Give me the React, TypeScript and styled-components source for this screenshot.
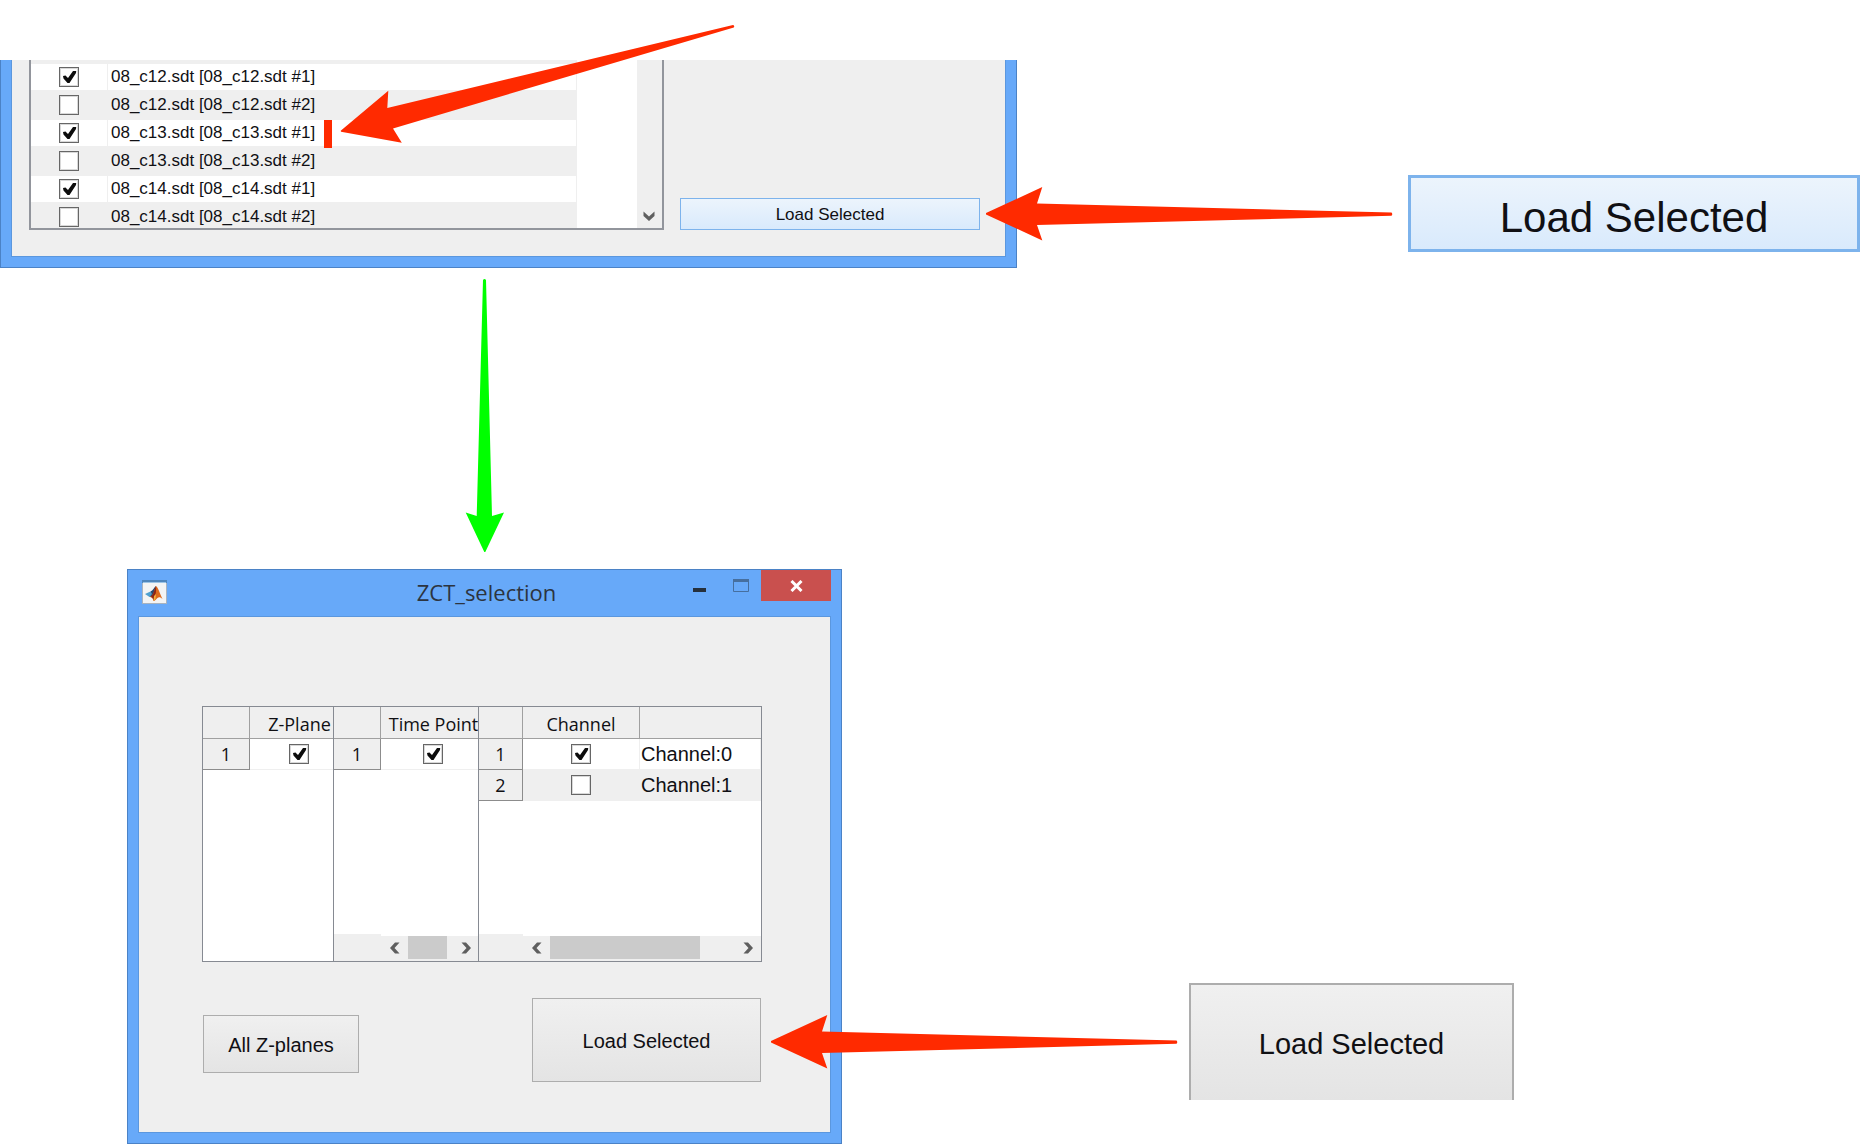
import React, { useState } from "react";
import styled, { createGlobalStyle, css } from "styled-components";

const sans = `"Liberation Sans", Arial, sans-serif`;
const ui = `"Open Sans", "Noto Sans", sans-serif`;
const line = "#868a92";
const face = "#efefef";

const Global = createGlobalStyle`
  *, *::before, *::after { box-sizing: border-box; }
  body { margin: 0; background: #fff; color: #101014; font-family: ${sans}; }
  button, input { font: inherit; color: inherit; margin: 0; }
`;

const Page = styled.main`
  display: flex;
  flex-direction: column;
  padding-top: 60px;
`;

const Step = styled.section<{ $indent?: number }>`
  display: flex;
  align-items: flex-start;
  padding-left: ${(p) => p.$indent ?? 0}px;
`;

const Frame = styled.div<{ $width: number; $cut?: boolean }>`
  flex: 0 1 ${(p) => p.$width}px;
  min-width: 0;
  padding: 0 10px 10px;
  background: #67a9f9;
  border: 1px solid #4b82c6;
  ${(p) => p.$cut && css`border-top: 0;`}
`;

/* ---------- file list ---------- */

const ListClient = styled.div`
  display: flex;
  align-items: flex-end;
  gap: 16px;
  padding: 0 25px 26px 17px;
  background: ${face};
  border: 1px solid #5b97de;
  border-top: 0;
`;

const ListBox = styled.div`
  flex: 1;
  min-width: 0;
  height: 170px;
  display: flex;
  overflow: hidden;
  background: #fff;
  border: 2px solid #92959c;
  border-top: 0;
`;

const ListPane = styled.div`
  flex: 1;
  margin-right: 60px;
  padding-top: 3px;
  background: ${face};
`;

const FileTable = styled.table`
  width: 100%;
  table-layout: fixed;
  border-collapse: separate;
  border-spacing: 0;
  font-size: 17px;
  line-height: 20px;
`;

const FileRow = styled.tr`
  td {
    height: 28px;
    padding: 0 0 0 3px;
    border: 1px solid ${face};
    border-left: 0;
    background: #fff;
  }
  td:first-child { padding: 0; }
  &:nth-child(even) td { background: ${face}; }
`;

const ListScroll = styled.div`
  width: 25px;
  display: flex;
  flex-direction: column;
  justify-content: flex-end;
  background: ${face};
`;

const ArrowButton = styled.button`
  width: 27px;
  height: 23px;
  padding: 0;
  border: 0;
  background: none;
  display: flex;
  align-items: center;
  justify-content: center;
  ${ListScroll} & { width: 23px; height: 25px; }
`;

/* ---------- push buttons ---------- */

const PushButton = styled.button<{
  $w?: number;
  $h: number;
  $size: number;
  $blue?: boolean;
  $edge?: number;
  $cut?: boolean;
  $drop?: number;
}>`
  width: ${(p) => (p.$w ? `${p.$w}px` : "auto")};
  flex: ${(p) => (p.$w ? "0 0 auto" : "1 1 0")};
  min-height: ${(p) => p.$h}px;
  padding: ${(p) => p.$drop ?? 2}px 0 0;
  font-family: ${sans};
  font-size: ${(p) => p.$size}px;
  white-space: nowrap;
  border: ${(p) => p.$edge ?? 1}px solid ${(p) => (p.$blue ? "#7db3ec" : "#adadad")};
  background: ${(p) =>
    p.$blue
      ? "linear-gradient(#ecf4fc, #d9eafc)"
      : "linear-gradient(#f0f0f0, #e4e4e4)"};
  ${(p) => p.$cut && css`border-bottom: 0;`}
`;

const Callout = styled.div<{ $top: number; $gap: number; $grow?: boolean }>`
  display: flex;
  flex: ${(p) => (p.$grow ? "1 1 0" : "0 0 auto")};
  padding-top: ${(p) => p.$top}px;
  margin-left: ${(p) => p.$gap}px;
`;

/* ---------- check box ---------- */

const CheckWrap = styled.label`
  display: grid;
  width: 20px;
  height: 20px;
  margin: 0 auto;
  > * { grid-area: 1 / 1; }
  svg { pointer-events: none; }
`;

const CheckInput = styled.input`
  appearance: none;
  width: 20px;
  height: 20px;
  background: #fff;
  border: 1px solid #666;
  box-shadow: inset 0 0 0 1px #d8d8d8;
  & + svg { visibility: hidden; }
  &:checked + svg { visibility: visible; }
`;

function Check({ on, label }: { on?: boolean; label: string }) {
  const [checked, setChecked] = useState(!!on);
  return (
    <CheckWrap>
      <CheckInput
        type="checkbox"
        aria-label={label}
        checked={checked}
        onChange={(e) => setChecked(e.target.checked)}
      />
      <svg width="20" height="20" viewBox="0 0 20 20" aria-hidden="true">
        <path d="M4 9 L6.5 8.5 L9 11 L14 4 L17.2 4 L17 6 L10.5 16 L8.5 16 L4.5 11.5 Z" fill="#0c0c0c" />
      </svg>
    </CheckWrap>
  );
}

function Chevron({ dir }: { dir: "left" | "right" | "down" }) {
  const turn = { left: 0, right: 180, down: -90 }[dir];
  return (
    <svg width="12" height="12" viewBox="0 0 12 12" aria-hidden="true">
      <path
        d="M1 6 L6 0.5 H10.5 L5.5 6 L10.5 11.5 H6 Z"
        fill="#5f5f5f"
        transform={`rotate(${turn} 6 6)`}
      />
    </svg>
  );
}

/* ---------- dialog ---------- */

const TitleBar = styled.header`
  display: grid;
  grid-template-columns: 1fr auto 1fr;
  height: 46px;
  align-items: center;
  padding: 0 0 2px 4px;
`;

const Title = styled.h1`
  margin: 0;
  font: 400 22px/30px ${ui};
  color: #2c3440;
`;

const Controls = styled.div`
  display: flex;
  align-self: start;
  justify-content: flex-end;
`;

const ControlButton = styled.button<{ $close?: boolean }>`
  width: ${(p) => (p.$close ? 70 : 41)}px;
  height: 31px;
  padding: 0;
  border: 0;
  display: flex;
  align-items: center;
  justify-content: center;
  background: ${(p) => (p.$close ? "#c9504e" : "none")};
`;

const DialogClient = styled.div`
  padding: 89px 68px 50px 63px;
  background: ${face};
  border: 1px solid #5b97de;
`;

const Panels = styled.div`
  display: grid;
  grid-template-columns: 131fr 145fr 282fr;
  height: 256px;
  border: 1px solid ${line};
  background: #fff;
`;

const Panel = styled.div`
  min-width: 0;
  overflow: hidden;
  display: flex;
  flex-direction: column;
  justify-content: space-between;
  & + & { border-left: 1px solid ${line}; margin-left: -1px; }
`;

const Grid = styled.table<{ $width: number }>`
  width: ${(p) => p.$width}px;
  table-layout: fixed;
  border-collapse: separate;
  border-spacing: 0;
  font: 400 18px/24px ${ui};
  text-align: center;
  th, td { height: 31px; padding: 0; font-weight: 400; white-space: nowrap; }
  th { background: ${face}; border-right: 1px solid #8c8c8c; border-bottom: 1px solid #8c8c8c; }
  thead th { height: 32px; padding-top: 2px; border-right-color: #a0a0a0; border-bottom-color: #a0a0a0; }
  thead th:last-child { border-right: 0; }
  td { border-right: 1px solid ${face}; border-bottom: 1px solid ${face}; }
  tbody tr:nth-child(even) td { background: ${face}; }
`;

const NameCell = styled.td`
  && { padding-left: 1px; text-align: left; font: 400 20px/24px ${sans}; }
`;

const ScrollRow = styled.div`
  display: flex;
  align-items: flex-end;
`;

const Corner = styled.div<{ $w: number }>`
  width: ${(p) => p.$w}px;
  height: 27px;
  background: ${face};
`;

const Track = styled.div`
  flex: 1;
  display: flex;
  height: 25px;
  padding-bottom: 2px;
  background: ${face};
`;

const ThumbLane = styled.div`
  flex: 1;
`;

const Thumb = styled.div<{ $w: number }>`
  width: ${(p) => p.$w}px;
  height: 100%;
  background: #cbcbcb;
`;

const Actions = styled.div`
  display: flex;
  align-items: flex-start;
  justify-content: space-between;
  padding: 36px 1px 0;
`;

const Lowered = styled.div`
  padding-top: 17px;
`;

function HScroll({ corner, thumb }: { corner: number; thumb: number }) {
  return (
    <ScrollRow>
      <Corner $w={corner} />
      <Track>
        <ArrowButton aria-label="Scroll left"><Chevron dir="left" /></ArrowButton>
        <ThumbLane><Thumb $w={thumb} /></ThumbLane>
        <ArrowButton aria-label="Scroll right"><Chevron dir="right" /></ArrowButton>
      </Track>
    </ScrollRow>
  );
}

function MatlabIcon() {
  return (
    <svg width="25" height="24" viewBox="0 0 25 24" aria-hidden="true">
      <rect x="0.5" y="0.5" width="24" height="23" fill="#f3f4f5" stroke="#a9b3bf" />
      <rect x="0" y="0" width="25" height="3" fill="#4f86bd" />
      <rect x="1" y="2" width="23" height="1" fill="#9cc4e6" />
      <path d="M3 14 L8.5 11.5 L11 14.5 L7.5 17 Z" fill="#4fa0cf" />
      <path d="M8.5 11.5 C11 10.5 12 7.5 14 6 L13 12 L10 16.5 L7.5 17 L10 14 Z" fill="#27486f" />
      <path d="M14 6 C16 7 18 14 20.5 19 C18.5 17 17 16.5 15.5 18 C14 19.5 13 21 11.5 21 C11 18.5 9.5 17 8 17 C11.5 16 12.5 9 14 6 Z" fill="#dd6a1c" />
      <path d="M14 6 C14.5 9 14 14 12 20.5 C11 18 10 17 8.5 17 C11.5 15.5 12.5 9 14 6 Z" fill="#8d2416" />
      <path d="M12 16 L14 14 L13.5 19 L11.5 21 Z" fill="#f5b23a" />
    </svg>
  );
}

/* ---------- arrows ---------- */

const SideArrow = styled.svg<{ $top: number; $overlap: number }>`
  flex: none;
  display: block;
  position: relative;
  z-index: 1;
  margin-top: ${(p) => p.$top}px;
  margin-left: -${(p) => p.$overlap}px;
`;

const DownArrow = styled.svg`
  display: block;
  margin: 11px 0 16px 465px;
`;

const Marks = styled.svg`
  position: absolute;
  left: 320px;
  top: 20px;
  z-index: 1;
  pointer-events: none;
`;

const red = "#ff2a00";

function LeftArrow({ top, overlap }: { top: number; overlap: number }) {
  return (
    <SideArrow $top={top} $overlap={overlap} width="407" height="54" viewBox="0 0 407 54" aria-hidden="true">
      <path
        d="M0 26 L56.3 0 L51 16.4 L405.5 25.6 Q407 27.2 405.5 28.8 L51 38 L56.3 53.5 L0 27.4 Z"
        fill={red}
      />
    </SideArrow>
  );
}

const files = ["08_c12.sdt", "08_c13.sdt", "08_c14.sdt"];

export default function App() {
  return (
    <Page>
      <Global />
      <Marks width="420" height="130" viewBox="320 20 420 130" aria-hidden="true">
        <path
          d="M340.7 130.7 L388.3 90.7 L387.3 108 L733 25 Q735 25.6 733.8 27.4 L393 128.4 L401.8 142.7 L341 131.7 Z"
          fill={red}
        />
        <rect x="324" y="120" width="8" height="28" fill={red} />
      </Marks>

      <Step>
        <Frame $width={1017} $cut>
          <ListClient>
            <ListBox>
              <ListPane>
                <FileTable aria-label="Files">
                  <colgroup>
                    <col style={{ width: 77 }} />
                    <col />
                  </colgroup>
                  <tbody>
                    {files.flatMap((f) =>
                      [1, 2].map((n) => (
                        <FileRow key={f + n}>
                          <td><Check on={n === 1} label={`${f} #${n}`} /></td>
                          <td>{`${f} [${f} #${n}]`}</td>
                        </FileRow>
                      ))
                    )}
                  </tbody>
                </FileTable>
              </ListPane>
              <ListScroll>
                <ArrowButton aria-label="Scroll down"><Chevron dir="down" /></ArrowButton>
              </ListScroll>
            </ListBox>
            <PushButton $w={300} $h={32} $size={17} $blue>Load Selected</PushButton>
          </ListClient>
        </Frame>
        <LeftArrow top={127} overlap={31} />
        <Callout $top={115} $gap={15} $grow>
          <PushButton $h={77} $size={42} $blue $edge={3} $drop={8}>Load Selected</PushButton>
        </Callout>
      </Step>

      <DownArrow width="39" height="274" viewBox="0 0 39 274" aria-hidden="true">
        <path
          d="M18 1 Q19.5 -1 21 1 L27 237 L39 233.5 L20.3 273 L19.3 273 L0.7 233.5 L11.7 237 Z"
          fill="#00ff00"
        />
      </DownArrow>

      <Step $indent={127}>
        <Frame $width={715}>
          <TitleBar>
            <MatlabIcon />
            <Title>ZCT_selection</Title>
            <Controls>
              <ControlButton aria-label="Minimize">
                <svg width="13" height="13" aria-hidden="true">
                  <rect y="9" width="13" height="4" fill="#26303c" />
                </svg>
              </ControlButton>
              <ControlButton aria-label="Maximize">
                <svg width="16" height="13" aria-hidden="true">
                  <path d="M0.5 1.5 H15.5 V12.5 H0.5 Z" fill="none" stroke="#466f9f" />
                  <rect width="16" height="3" fill="#466f9f" />
                </svg>
              </ControlButton>
              <ControlButton $close aria-label="Close">
                <svg width="13" height="12" viewBox="0 0 13 12" aria-hidden="true">
                  <path d="M1.5 1 L11.5 11 M11.5 1 L1.5 11" stroke="#fff" strokeWidth="3" />
                </svg>
              </ControlButton>
            </Controls>
          </TitleBar>
          <DialogClient>
            <Panels>
              <Panel>
                <Grid $width={146}>
                  <colgroup><col style={{ width: 47 }} /><col /></colgroup>
                  <thead><tr><th /><th scope="col">Z-Plane</th></tr></thead>
                  <tbody>
                    <tr><th scope="row">1</th><td><Check on label="Z-Plane 1" /></td></tr>
                  </tbody>
                </Grid>
              </Panel>
              <Panel>
                <Grid $width={152}>
                  <colgroup><col style={{ width: 47 }} /><col /></colgroup>
                  <thead><tr><th /><th scope="col">Time Point</th></tr></thead>
                  <tbody>
                    <tr><th scope="row">1</th><td><Check on label="Time Point 1" /></td></tr>
                  </tbody>
                </Grid>
                <HScroll corner={47} thumb={39} />
              </Panel>
              <Panel>
                <Grid $width={282}>
                  <colgroup>
                    <col style={{ width: 44 }} />
                    <col style={{ width: 117 }} />
                    <col />
                  </colgroup>
                  <thead><tr><th /><th scope="col">Channel</th><th /></tr></thead>
                  <tbody>
                    <tr>
                      <th scope="row">1</th>
                      <td><Check on label="Channel:0" /></td>
                      <NameCell>Channel:0</NameCell>
                    </tr>
                    <tr>
                      <th scope="row">2</th>
                      <td><Check label="Channel:1" /></td>
                      <NameCell>Channel:1</NameCell>
                    </tr>
                  </tbody>
                </Grid>
                <HScroll corner={44} thumb={150} />
              </Panel>
            </Panels>
            <Actions>
              <Lowered>
                <PushButton $w={156} $h={58} $size={20}>All Z-planes</PushButton>
              </Lowered>
              <PushButton $w={229} $h={84} $size={20}>Load Selected</PushButton>
            </Actions>
          </DialogClient>
        </Frame>
        <LeftArrow top={446} overlap={71} />
        <Callout $top={414} $gap={11}>
          <PushButton $w={325} $h={117} $size={29} $edge={2} $cut $drop={4}>Load Selected</PushButton>
        </Callout>
      </Step>
    </Page>
  );
}
